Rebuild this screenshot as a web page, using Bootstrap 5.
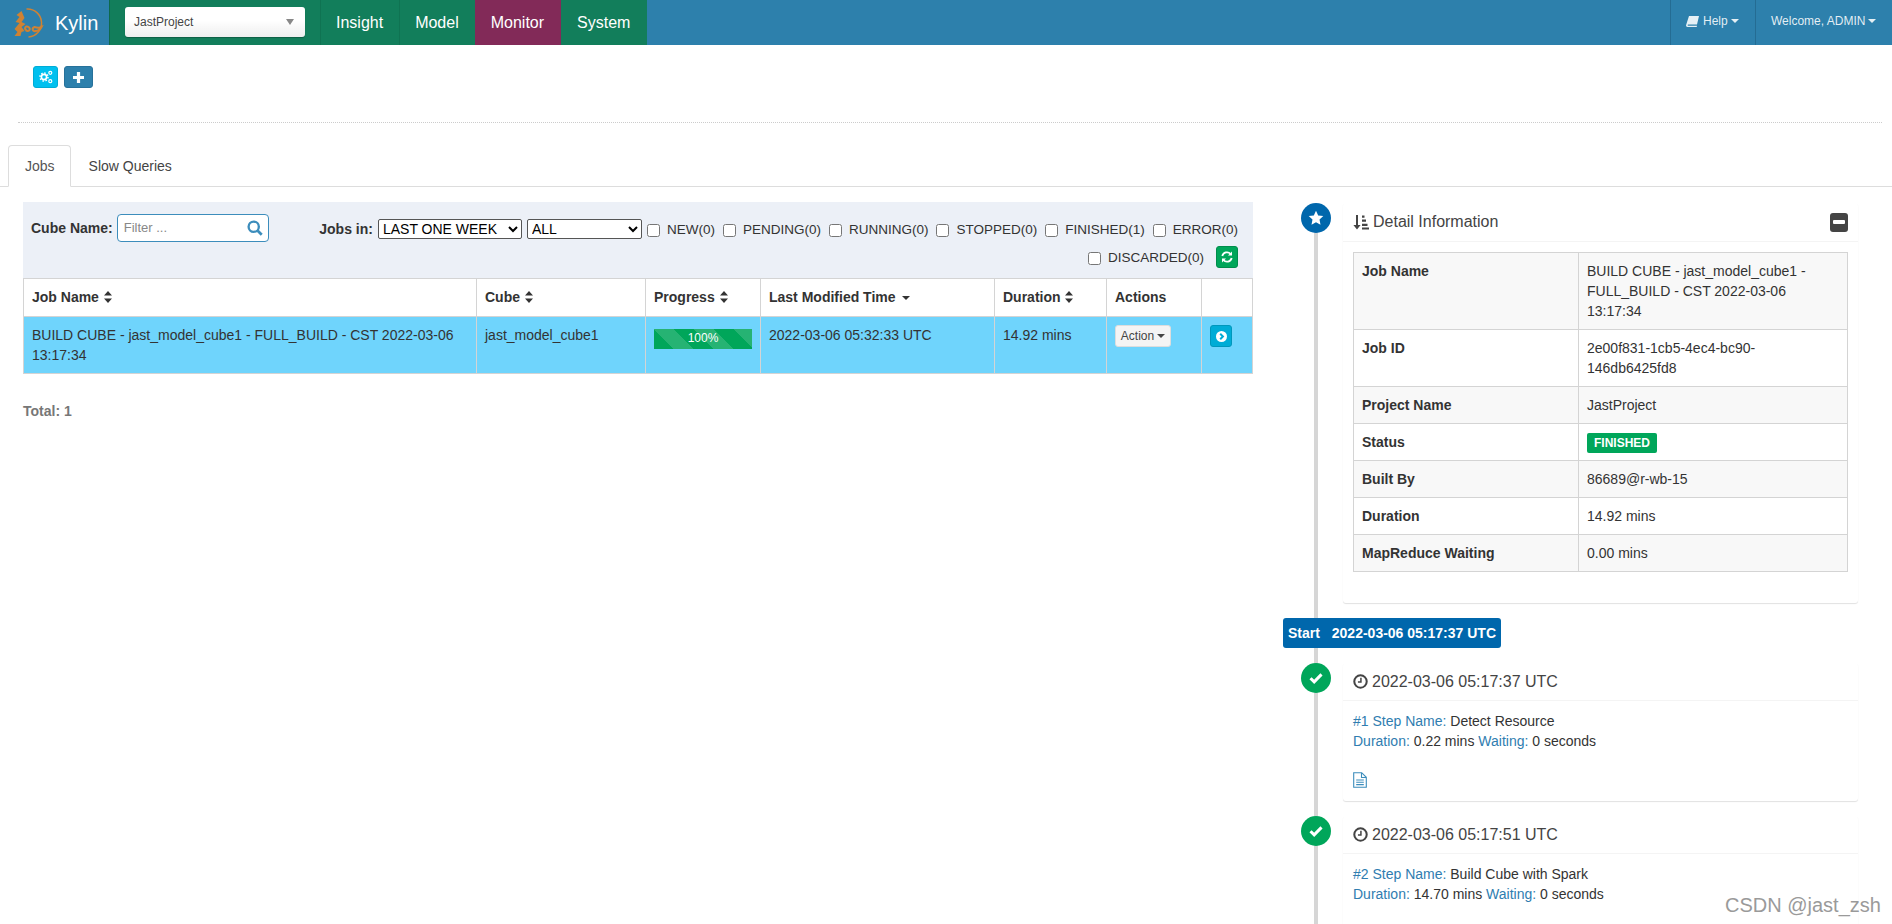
<!DOCTYPE html>
<html lang="en">
<head>
  <meta charset="UTF-8">
  <title>Kylin | Monitor</title>
  <link href="https://cdn.jsdelivr.net/npm/bootstrap@5.3.2/dist/css/bootstrap.min.css" rel="stylesheet">
<style>
  html, body { height: 924px; overflow: hidden; }
  body { font-family: "Liberation Sans", Arial, sans-serif; font-size: 14px; line-height: 20px; color: #333; background: #fff; }
  svg { display: inline-block; vertical-align: middle; }

  /* top bar */
  .kylin-bar { height: 45px; background: #2d80ac; padding: 0; flex-wrap: nowrap; justify-content: flex-start; }
  .kylin-brand { width: 109px; height: 45px; padding-left: 13px; color: #fff; font-size: 20px; gap: 11px; }
  .project-box { width: 211px; height: 45px; background: #127e5b; border-left: 1px solid #0d6a4c; padding: 7px 15px 0 15px; }
  .project-pick { width: 180px; height: 30px; padding: 0 9px; font-size: 12px; color: #444; border-radius: 3px; background: linear-gradient(#fff 45%, #eee); box-shadow: 0 1px 1px rgba(0,0,0,.25); }
  .project-arrow { width: 0; height: 0; border-left: 4px solid transparent; border-right: 4px solid transparent; border-top: 6px solid #888; margin-right: 2px; }
  .top-link { height: 45px; line-height: 45px; padding: 0 16px 0 15px; color: #fff; font-size: 16px; background: #127e5b; border-left: 1px solid #0f7352; text-decoration: none; }
  .top-link.is-on { background: #822a58; border-left: 0; padding: 0 17px 0 16px; }
  .top-link.is-on + .top-link { padding-left: 16px; border-left: 0; padding-right: 17px; }
  .side-link { height: 45px; line-height: 43px; color: rgba(255,255,255,.88); font-size: 12px; border-left: 1px solid #246c93; text-decoration: none; white-space: nowrap; }
  .side-help { width: 85px; padding-left: 15px; }
  .side-user { width: 137px; padding-left: 15px; }
  .down-caret { display: inline-block; width: 0; height: 0; margin-left: 3px; vertical-align: 2px; border-left: 4px solid transparent; border-right: 4px solid transparent; border-top: 4px solid currentColor; }

  /* buttons over the tabs */
  .tool-row { padding: 21px 0 0 33px; gap: 6px; height: 43px; }
  .mini-btn { height: 22px; padding: 0; border-radius: 3px; border: 1px solid transparent; color: #fff; display: inline-flex; align-items: center; justify-content: center; }
  .btn-cogs { width: 25px; background: #00c0ef; border-color: #00acd6; }
  .btn-add { width: 29px; background: #2d80ac; border-color: #27719a; }
  .btn-reload { width: 22px; background: #00a65a; border-color: #008d4c; }
  .btn-open { width: 22px; background: #00acd6; border-color: #0097bc; }
  .dot-rule { margin: 34px 10px 22px 18px; border: 0; border-top: 1px dotted #ccc; opacity: 1; }

  .kylin-tabs { padding-left: 8px; --bs-nav-tabs-border-color: #ddd; --bs-nav-tabs-border-radius: 4px; }
  .kylin-tabs .nav-link { height: 42px; padding: 10px 16px; color: #444; line-height: 20px; }
  .kylin-tabs .nav-link.active { color: #555; border-color: #ddd #ddd #fff; padding-right: 15px; margin-right: 1px; }

  /* left pane */
  .jobs-pane { width: 1260px; padding: 15px 15px 0; flex: none; }
  .job-filter { height: 76px; background: #ecf0f7; padding: 12px 15px 0 8px; }
  .filter-label { font-weight: 700; margin: 0 4px 0 0; }
  .filter-search { width: 152px; height: 28px; padding: 0 5px 0 6px; border: 1px solid #3c8dbc; border-radius: 4px; background: #fff; font-size: 13px; color: #888; }
  .filter-right { row-gap: 6px; padding-top: 4px; column-gap: 8px; }
  .filter-right .filter-label { margin: 0; }
  .filter-right select { height: 20px; font-size: 14px; font-family: "Liberation Sans", Arial, sans-serif; padding: 0; margin-left: -3px; color: #000; background: #fff; border: 1px solid #555; border-radius: 2px; }
  .select-range { width: 144px; }
  .filter-right .select-kind { width: 115px; margin-right: -3px; }
  .filter-right label { margin: 0; padding-top: 2px; color: #333; font-size: 13.5px; white-space: nowrap; display: inline-flex; align-items: center; gap: 7px; }
  .filter-right input { margin: 0; width: 13px; height: 13px; }
  .job-table { table-layout: fixed; width: 1230px; margin: 0; --bs-table-border-color: #d4d4d4; --bs-table-color: #333; }
  .job-table th, .job-table td { padding: 8px; line-height: 20px; }
  .job-table th { padding-bottom: 9px; white-space: nowrap; }
  .job-row > td { --bs-table-bg: #6fd4fc; }
  .sort-mark { margin-left: 1px; vertical-align: -1px; }
  .job-progress { --bs-progress-height: 20px; --bs-progress-border-radius: 0; --bs-progress-bg: #00a65a; margin-top: 4px; }
  .job-progress .progress-bar { background-color: #00a65a; background-size: 40px 40px; font-size: 12px; padding-bottom: 2px; }
  .action-btn { height: 22px; width: 56px; margin-top: 0; padding: 0; font-size: 12px; color: #444; background: #f4f4f4; border: 1px solid #ddd; border-radius: 3px; }
  .job-total { margin-top: 27px; font-weight: 700; color: #777; }

  /* right pane */
  .flow-pane { position: relative; width: 515px; margin-left: 75px; padding-top: 16px; flex: none; }
  .flow-line { position: absolute; left: -29px; top: 30px; bottom: -200px; width: 4px; background: #d6d6d6; }
  .flow-item { position: relative; margin-bottom: 15px; background: #fff; border-radius: 3px; box-shadow: 0 1px 1px rgba(0,0,0,.12); }
  .flow-dot { position: absolute; left: -42px; top: 0; width: 30px; height: 30px; border-radius: 50%; color: #fff; display: flex; align-items: center; justify-content: center; }
  .dot-blue { background: #0067ac; }
  .dot-green { background: #00a65a; }
  .flow-head { height: 39px; padding: 0 10px; font-size: 16px; color: #444; border-bottom: 1px solid #f4f4f4; gap: 4px; }
  .flow-head.is-step { height: 38px; padding-top: 0; }
  .flow-body { padding: 10px; }
  .fold-btn { width: 18px; height: 19px; background: #444; border-radius: 3px; }
  .detail-table { width: 495px; margin: 0 0 21px; table-layout: fixed; --bs-table-border-color: #d4d4d4; --bs-table-color: #333; --bs-table-striped-bg: #f8f8f8; --bs-table-striped-color: #333; }
  .detail-table th, .detail-table td { padding: 8px; line-height: 20px; }
  .detail-table th { width: 225px; }
  .state-tag { display: inline-block; height: 20px; line-height: 20px; padding: 0 7px; background: #00a65a; color: #fff; font-size: 12px; font-weight: 700; border-radius: 2px; }
  .flow-stamp { position: relative; display: inline-block; margin: 0 0 15px -60px; height: 30px; line-height: 30px; padding: 0 5px; background: #0067ac; color: #fff; font-weight: 700; border-radius: 3px; white-space: nowrap; }
  .stamp-time { margin-left: 8px; }
  .step-key { color: #2f7db0; }
  .step-file { margin-top: 18px; height: 22px; color: #3c8dbc; }
  .csdn-mark { position: absolute; left: 1725px; top: 894px; font-size: 20px; line-height: 22px; color: #9a9a9a; text-shadow: 0 0 2px #fff; white-space: nowrap; }
</style>
</head>
<body>

  <svg width="0" height="0" class="position-absolute">
    <symbol id="i-sort" viewBox="0 0 8 12"><path d="M4 0l4 4.600H0zM4 12L0 7.400h8z" fill="currentColor"/></symbol>
    <symbol id="i-check" viewBox="0 0 14 14"><path d="M1.500 7.200l3.700 3.700 7.300-7.500" fill="none" stroke="currentColor" stroke-width="3"/></symbol>
    <symbol id="i-clock" viewBox="0 0 14 14"><circle cx="7" cy="7" r="5.800" fill="none" stroke="currentColor" stroke-width="1.900"/><path d="M7.400 3.400v4H4.600" fill="none" stroke="currentColor" stroke-width="1.400"/></symbol>
    <symbol id="i-file" viewBox="0 0 14 16"><path d="M.7.7h8l4.600 4.600v10H.7zM8.500.9v4.600h4.600M3.200 8h7.600M3.200 10.300h7.600M3.200 12.600h7.600" fill="none" stroke="currentColor" stroke-width="1.100"/></symbol>
  </svg>

  <!-- Navbar -->
  <nav class="navbar navbar-expand kylin-bar">
    <a class="kylin-brand d-flex align-items-center text-decoration-none" href="#">
      <svg width="31" height="30" viewBox="0 0 30 30" class="flex-shrink-0" fill="none" stroke="#cf8233">
        <path d="M13 1a14 14 0 0 1 2 28" stroke-width="1.500"/>
        <path d="M8 3L3 7l3 2-4 5 4 1-5 6 3 3-3 4h6l1-4 3-1-3-4 4-3-4-2 3-4z" fill="#cf8233" stroke="none"/>
        <path d="M12 22c3 3 6-1 3-3s-5 2-2 3M21 19c-3 1-2 5 1 4 3 0 5-2 6-4-2 1-4 1-7 0z" stroke-width="2"/>
      </svg>
      <span>Kylin</span>
    </a>
    <div class="project-box">
      <div class="project-pick d-flex align-items-center justify-content-between">
        <span>JastProject</span><span class="project-arrow"></span>
      </div>
    </div>
    <div class="d-flex">
      <a class="top-link" href="#">Insight</a>
      <a class="top-link" href="#">Model</a>
      <a class="top-link is-on" href="#">Monitor</a>
      <a class="top-link" href="#">System</a>
    </div>
    <div class="d-flex ms-auto">
      <a class="side-link side-help" href="#">
        <svg width="13" height="11" viewBox="0 0 13 11" class="me-1"><path d="M3 0h10l-2 8.500H2.200c-.8 0-.8 1.200 0 1.200H11l-.3 1.300H1.500C.4 11-.2 10 .1 9z" fill="currentColor"/></svg>Help<span class="down-caret"></span>
      </a>
      <a class="side-link side-user" href="#">Welcome, ADMIN<span class="down-caret"></span></a>
    </div>
  </nav>

  <div class="d-flex tool-row">
    <button class="mini-btn btn-cogs" type="button" aria-label="Settings">
      <svg width="14" height="14" viewBox="0 0 14 14" fill="none" stroke="#fff">
        <circle cx="5" cy="7" r="2.600" stroke-width="1.600"/>
        <circle cx="5" cy="7" r="4" stroke-width="1.500" stroke-dasharray="1.500 1.600"/>
        <circle cx="11.300" cy="2.800" r="1.500" stroke-width="1.200"/>
        <circle cx="11.300" cy="11.200" r="1.500" stroke-width="1.200"/>
      </svg>
    </button>
    <button class="mini-btn btn-add" type="button" aria-label="Add">
      <svg width="11" height="11" viewBox="0 0 11 11"><path d="M5.500 0v11M0 5.500h11" stroke="#fff" stroke-width="3.200"/></svg>
    </button>
  </div>

  <hr class="dot-rule">

  <ul class="nav nav-tabs kylin-tabs">
    <li class="nav-item"><a class="nav-link active" href="#">Jobs</a></li>
    <li class="nav-item"><a class="nav-link" href="#">Slow Queries</a></li>
  </ul>

  <div class="d-flex">
    <div class="jobs-pane ms-2">
      <div class="job-filter d-flex">
        <div class="d-flex align-items-center align-self-start flex-shrink-0">
          <label class="filter-label">Cube Name:</label>
          <div class="filter-search d-flex align-items-center justify-content-between">
            <span>Filter ...</span>
            <svg width="16" height="16" viewBox="0 0 15 15" fill="none" stroke="#3c8dbc"><circle cx="6.300" cy="6.300" r="4.800" stroke-width="2.200"/><path d="M9.800 9.800l4 4" stroke-width="2.600"/></svg>
          </div>
        </div>
        <div class="filter-right d-flex flex-wrap flex-grow-1 justify-content-end align-items-center align-content-start">
          <span class="filter-label">Jobs in:</span>
          <select class="select-range"><option>LAST ONE WEEK</option></select>
          <select class="select-kind"><option>ALL</option></select>
          <label><input type="checkbox">NEW(0)</label>
          <label><input type="checkbox">PENDING(0)</label>
          <label><input type="checkbox">RUNNING(0)</label>
          <label><input type="checkbox">STOPPED(0)</label>
          <label><input type="checkbox">FINISHED(1)</label>
          <label><input type="checkbox">ERROR(0)</label>
          <label><input type="checkbox">DISCARDED(0)</label>
          <button class="mini-btn btn-reload ms-1" type="button" aria-label="Refresh">
            <svg width="12" height="12" viewBox="0 0 12 12" fill="none" stroke="#fff" stroke-width="1.800">
              <path d="M1.300 5A4.800 4.800 0 0 1 9.600 3"/><path d="M10.700 7A4.800 4.800 0 0 1 2.400 9"/>
              <path d="M11 .4v4H7zM1 11.600v-4h4z" fill="#fff" stroke="none"/>
            </svg>
          </button>
        </div>
      </div>

      <table class="table table-bordered job-table">
        <colgroup>
          <col style="width:453px"><col style="width:169px"><col style="width:115px"><col style="width:234px"><col style="width:112px"><col style="width:95px"><col>
        </colgroup>
        <thead>
          <tr>
            <th>Job Name <svg class="sort-mark" width="8" height="12"><use href="#i-sort"/></svg></th>
            <th>Cube <svg class="sort-mark" width="8" height="12"><use href="#i-sort"/></svg></th>
            <th>Progress <svg class="sort-mark" width="8" height="12"><use href="#i-sort"/></svg></th>
            <th>Last Modified Time <span class="down-caret"></span></th>
            <th>Duration <svg class="sort-mark" width="8" height="12"><use href="#i-sort"/></svg></th>
            <th>Actions</th>
            <th></th>
          </tr>
        </thead>
        <tbody>
          <tr class="job-row">
            <td>BUILD CUBE - jast_model_cube1 - FULL_BUILD - CST 2022-03-06 13:17:34</td>
            <td>jast_model_cube1</td>
            <td><div class="progress job-progress"><div class="progress-bar progress-bar-striped w-100">100%</div></div></td>
            <td>2022-03-06 05:32:33 UTC</td>
            <td>14.92 mins</td>
            <td><button class="action-btn" type="button">Action<span class="down-caret"></span></button></td>
            <td>
              <button class="mini-btn btn-open" type="button" aria-label="Open">
                <svg width="11" height="11" viewBox="0 0 11 11"><circle cx="5.500" cy="5.500" r="5.500" fill="#fff"/><path d="M4.200 2.800l2.700 2.700-2.700 2.700" fill="none" stroke="#00acd6" stroke-width="2"/></svg>
              </button>
            </td>
          </tr>
        </tbody>
      </table>
      <div class="job-total">Total: 1</div>
    </div>

    <div class="flow-pane">
      <div class="flow-line"></div>

      <div class="flow-item">
        <span class="flow-dot dot-blue">
          <svg width="16" height="16" viewBox="0 0 16 16"><path d="M8 .8l2.200 4.700 5.100.6-3.800 3.500 1 5.100L8 12.200l-4.500 2.500 1-5.100L.7 6.100l5.100-.6z" fill="#fff"/></svg>
        </span>
        <div class="flow-head d-flex align-items-center">
          <svg width="16" height="16" viewBox="0 0 16 16" fill="#444"><path d="M3 1h2v10h2.600L4 15.500.4 11H3zM9 1.500h2.500v2.200H9zM9 5.600h4v2.200H9zM9 9.700h5.500v2.200H9zM9 13.600h7v2H9z"/></svg>
          <span>Detail Information</span>
          <span class="fold-btn ms-auto d-flex align-items-center justify-content-center">
            <svg width="12" height="4" viewBox="0 0 12 4"><rect width="12" height="4" rx="1" fill="#fff"/></svg>
          </span>
        </div>
        <div class="flow-body">
          <table class="table table-bordered table-striped detail-table">
            <tbody>
              <tr><th>Job Name</th><td>BUILD CUBE - jast_model_cube1 - FULL_BUILD - CST 2022-03-06 13:17:34</td></tr>
              <tr><th>Job ID</th><td>2e00f831-1cb5-4ec4-bc90-146db6425fd8</td></tr>
              <tr><th>Project Name</th><td>JastProject</td></tr>
              <tr><th>Status</th><td class="py-0 align-middle"><span class="state-tag">FINISHED</span></td></tr>
              <tr><th>Built By</th><td>86689@r-wb-15</td></tr>
              <tr><th>Duration</th><td>14.92 mins</td></tr>
              <tr><th>MapReduce Waiting</th><td>0.00 mins</td></tr>
            </tbody>
          </table>
        </div>
      </div>

      <div class="flow-stamp">Start <span class="stamp-time">2022-03-06 05:17:37 UTC</span></div>

      <div class="flow-item">
        <span class="flow-dot dot-green"><svg width="14" height="14"><use href="#i-check"/></svg></span>
        <div class="flow-head is-step d-flex align-items-center">
          <svg width="15" height="15"><use href="#i-clock"/></svg>
          <span>2022-03-06 05:17:37 UTC</span>
        </div>
        <div class="flow-body">
          <div><span class="step-key">#1 Step Name:</span> Detect Resource</div>
          <div><span class="step-key">Duration:</span> 0.22 mins <span class="step-key">Waiting:</span> 0 seconds</div>
          <div class="step-file"><svg width="14" height="16"><use href="#i-file"/></svg></div>
        </div>
      </div>

      <div class="flow-item">
        <span class="flow-dot dot-green"><svg width="14" height="14"><use href="#i-check"/></svg></span>
        <div class="flow-head is-step d-flex align-items-center">
          <svg width="15" height="15"><use href="#i-clock"/></svg>
          <span>2022-03-06 05:17:51 UTC</span>
        </div>
        <div class="flow-body">
          <div><span class="step-key">#2 Step Name:</span> Build Cube with Spark</div>
          <div><span class="step-key">Duration:</span> 14.70 mins <span class="step-key">Waiting:</span> 0 seconds</div>
          <div class="step-file"><svg width="14" height="16"><use href="#i-file"/></svg></div>
        </div>
      </div>
    </div>
  </div>

  <div class="csdn-mark">CSDN @jast_zsh</div>

  <script src="https://cdn.jsdelivr.net/npm/bootstrap@5.3.2/dist/js/bootstrap.bundle.min.js"></script>
</body>
</html>
